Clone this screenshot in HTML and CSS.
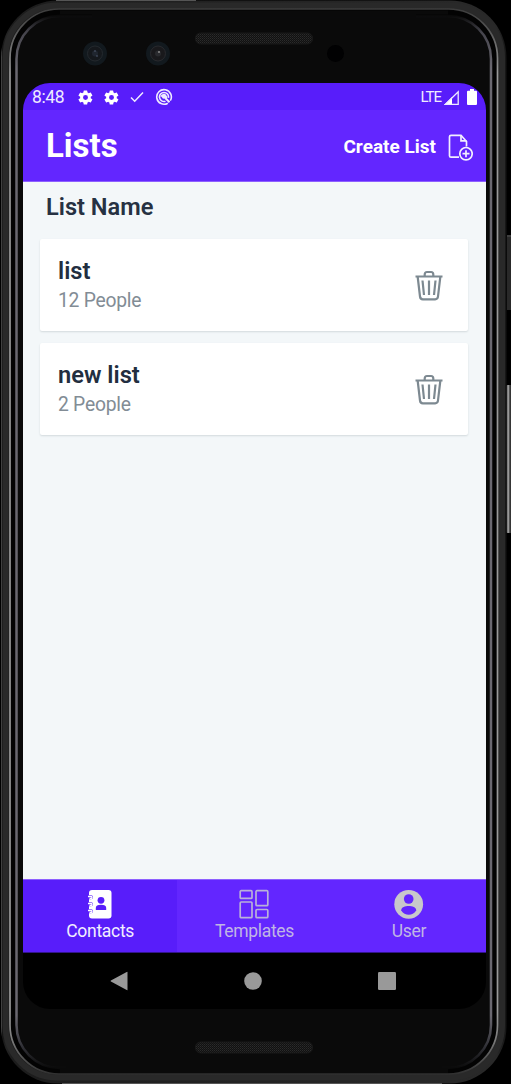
FILE: index.html
```html
<!DOCTYPE html>
<html lang="en">
<head>
<meta charset="utf-8">
<title>Lists</title>
<link rel="stylesheet" href="styles.css">
</head>
<body>
<div class="device">
  <svg class="frame" width="511" height="1084" viewBox="0 0 511 1084" aria-hidden="true">
    <defs>
      <linearGradient id="side" x1="0" x2="1"><stop offset="0" stop-color="#555"/><stop offset=".003" stop-color="#151515"/><stop offset=".01" stop-color="#232323"/><stop offset=".02" stop-color="#1c1c1c"/><stop offset=".98" stop-color="#292929"/><stop offset="1" stop-color="#151515"/></linearGradient>
      <linearGradient id="rim" x1="0" y1="0" x2="0" y2="1"><stop offset="0" stop-color="#3d3d3d"/><stop offset=".02" stop-color="#555"/><stop offset=".06" stop-color="#999"/><stop offset=".94" stop-color="#999"/><stop offset=".97" stop-color="#777"/><stop offset="1" stop-color="#303030"/></linearGradient>
      <linearGradient id="glass" x1="0" y1="0" x2="0" y2="1"><stop offset="0" stop-color="#0a0a0a"/><stop offset=".015" stop-color="#44434b"/><stop offset=".05" stop-color="#6a6870"/><stop offset=".95" stop-color="#6a6870"/><stop offset=".98" stop-color="#303036"/><stop offset="1" stop-color="#0a0a0a"/></linearGradient>
      <linearGradient id="key" x1="0" x2="1"><stop offset="0" stop-color="#444"/><stop offset=".35" stop-color="#aaa"/><stop offset=".65" stop-color="#444"/><stop offset="1" stop-color="#222"/></linearGradient>
      <pattern id="mesh" width="2" height="2" patternUnits="userSpaceOnUse"><rect width="2" height="2" fill="#111"/><rect width="1" height="1" fill="#2b2b2b"/><rect x="1" y="1" width="1" height="1" fill="#202020"/></pattern>
    </defs>
    <rect x="507" y="235" width="5" height="75" fill="#292929"/>
    <path d="M507 236h4" stroke="#555"/>
    <rect x="506.500" y="385" width="5" height="148" rx="1" fill="url(#key)"/>
    <rect x="1" y=".5" width="505.500" height="1083" rx="57" fill="url(#side)"/>
    <rect x="5.500" y="5.500" width="496.500" height="1072" rx="52" fill="none" stroke="#292929" stroke-width="6"/>
    <path d="M56 .5h140M62 1083.500h380" stroke="#555"/>
    <rect x="10" y="9" width="487.500" height="1065" rx="49" fill="#030303" stroke="url(#rim)" stroke-width="1.700"/>
    <rect x="16.500" y="16" width="474.500" height="1052" rx="43" fill="#0a0a0a" stroke="url(#glass)" stroke-width="2.500"/>
    <path d="M60 12.500h388M60 1071h388" stroke="#0a0a0a" stroke-width="4"/>
    <path d="M92 15.500h324M66 1068h376" stroke="#0a0a0a" stroke-width="4"/>
    <rect x="195.500" y="33" width="117" height="11" rx="5" fill="url(#mesh)" stroke="#181818"/>
    <rect x="195.500" y="1042" width="117" height="11" rx="5" fill="url(#mesh)" stroke="#181818"/>
    <g><circle cx="95" cy="53.500" r="12" fill="#12191e"/><circle cx="95" cy="53.500" r="7.500" fill="#15181c" stroke="#24292e"/><circle cx="95" cy="53.500" r="3" fill="#20262f"/><path d="M94 51h2M96 56h2" stroke="#4f586e"/></g>
    <g><circle cx="158" cy="53.500" r="12" fill="#12191e"/><circle cx="158" cy="53.500" r="7.500" fill="#19191c" stroke="#292a2e"/><circle cx="158" cy="53.500" r="3" fill="#292a2e"/><circle cx="159" cy="52" r="1" fill="#888"/></g>
    <circle cx="335.500" cy="53.500" r="8.500" fill="#010102"/>
  </svg>

  <div class="screen">
    <div class="status">
      <span class="time">8:48</span>
      <svg class="gear" width="17" height="17" viewBox="0 0 24 24"><path id="cog" fill-rule="evenodd" d="M19.400 13a7.500 7.500 0 0 0 0-2l2.100-1.600a.5.5 0 0 0 .1-.7l-2-3.400a.5.5 0 0 0-.6-.2l-2.500 1a7.300 7.300 0 0 0-1.700-1l-.4-2.600a.5.5 0 0 0-.5-.5h-4a.5.5 0 0 0-.5.5L9 5.100a7.300 7.300 0 0 0-1.700 1l-2.500-1a.5.5 0 0 0-.6.2l-2 3.400a.5.500 0 0 0 .1.700L4.500 11a7.500 7.500 0 0 0 0 2l-2.200 1.600a.5.500 0 0 0-.1.700l2 3.400a.5.500 0 0 0 .6.200l2.500-1a7.300 7.300 0 0 0 1.700 1l.4 2.600a.5.500 0 0 0 .5.500h4a.5.500 0 0 0 .5-.5l.4-2.600a7.300 7.300 0 0 0 1.700-1l2.500 1a.5.500 0 0 0 .6-.2l2-3.400a.5.500 0 0 0-.1-.7zM12 15.500a3.500 3.500 0 1 1 0-7 3.500 3.500 0 0 1 0 7z"/></svg>
      <svg class="gear" width="17" height="17" viewBox="0 0 24 24"><use href="#cog"/></svg>
      <svg class="check" width="14" height="12" viewBox="0 0 14 12"><path d="M1 6.500l3.700 3.700L13 1.500"/></svg>
      <svg class="badge" width="18" height="18" viewBox="0 0 18 18"><path d="M12.800 15.200A7.300 7.300 0 1 1 15.300 12.700M10.500 13.200A4.500 4.500 0 1 1 13.400 9.800"/><path class="solid" d="M5.200 8.300Q7 5 10.300 6L12.500 9l-.7 1 3.400 3.600-1.400 1.400-4.500-4.500-1.300.3-1.500-2z"/></svg>
      <span class="lte">LTE</span>
      <svg class="signal" width="15" height="15" viewBox="0 0 15 15"><path class="solid" d="M0 15L8 7v8z"/><path d="M1.500 14.300H14.200V1.700z"/></svg>
      <svg class="battery" width="10" height="16" viewBox="0 0 10 16"><path d="M3 0h4v1.700h2a1 1 0 0 1 1 1V15a1 1 0 0 1-1 1H1a1 1 0 0 1-1-1V2.700a1 1 0 0 1 1-1h2z"/></svg>
    </div>

    <header class="appbar">
      <h1 class="title">Lists</h1>
      <div class="create">
        <span class="create-label">Create List</span>
        <svg class="create-icon" width="25" height="27" viewBox="0 0 25 27"><path d="M11 23.200H3Q1.500 23.200 1.500 21.700V2.800Q1.500 1.300 3 1.300H13L18.500 7.500V12.500"/><path d="M13 1.500V6.800H18.500"/><circle cx="18" cy="19.700" r="6.200"/><path class="plus" d="M18 16.200v7M14.500 19.700h7"/></svg>
      </div>
    </header>

    <main class="content">
      <h2 class="heading">List Name</h2>
      <section class="card">
        <div><div class="name">list</div><div class="people">12 People</div></div>
        <svg class="trash" width="28" height="31" viewBox="0 0 28 31"><path id="bin" d="M.5 6.500H27.500M9.700 6V4.500Q9.700 2 12 2h4Q18.300 2 18.300 4.500V6M2.700 7L5 26.500Q5.300 29.300 7.800 29.300H20.200Q22.700 29.300 23 26.500L25.300 7M7.500 10.500L9 25M14 10.500V25M20.500 10.500L19 25"/></svg>
      </section>
      <section class="card">
        <div><div class="name wide">new list</div><div class="people">2 People</div></div>
        <svg class="trash" width="28" height="31" viewBox="0 0 28 31"><use href="#bin"/></svg>
      </section>
    </main>

    <nav class="tabs">
      <div class="tab active">
        <svg width="28" height="30" viewBox="0 0 28 30"><rect x="3" y="1" width="22.500" height="28.500" rx="3" fill="#fff"/><path d="M2 8.200h3M2 15.200h3M2 22.200h3" stroke="#581dfa" stroke-width="4" stroke-linecap="round"/><path d="M2 7.500h3Q6 7.500 6 8.500T5 9.500H3.500M2 14.500h3Q6 14.500 6 15.500T5 16.500H3.500M2 21.500h3Q6 21.500 6 22.500T5 23.500H3.500" fill="none" stroke="#fff" stroke-width="1.300"/><circle cx="15" cy="11.300" r="3.400" fill="#581dfa"/><path d="M9.800 21v-2Q9.800 15.700 15 15.700T20.200 19v2z" fill="#581dfa"/></svg>
        <span>Contacts</span>
      </div>
      <div class="tab">
        <svg width="30" height="30" viewBox="0 0 30 30"><g fill="none" stroke="#b9b1d9" stroke-width="1.700"><rect x="1.200" y="1.700" width="11.800" height="7.700" rx="1"/><rect x="1.200" y="13" width="11.800" height="15.700" rx="1"/><rect x="17" y="1.700" width="11.800" height="15" rx="1"/><rect x="17" y="20.500" width="11.800" height="8.200" rx="1"/></g></svg>
        <span>Templates</span>
      </div>
      <div class="tab">
        <svg width="30" height="30" viewBox="0 0 30 30"><circle cx="14.700" cy="15.300" r="14.400" fill="#c8c8cb"/><circle cx="14.700" cy="10" r="4.800" fill="#6326ff"/><path d="M7.200 21.500C7.200 18 11.200 17 14.700 17S22.200 18 22.200 21.500Q19.200 25.800 14.700 25.800T7.200 21.500z" fill="#6326ff"/></svg>
        <span>User</span>
      </div>
    </nav>

    <div class="system">
      <svg width="18" height="20" viewBox="0 0 18 20"><path d="M17.500 1.300v17.400q0 .8-.8.400L.9 10.600q-.8-.6 0-1.200L16.700.9q.8-.4.800.4z"/></svg>
      <svg width="18" height="18" viewBox="0 0 18 18"><circle cx="9" cy="9" r="8.800"/></svg>
      <svg width="18" height="18" viewBox="0 0 18 18"><rect width="18" height="18" rx="1.300"/></svg>
    </div>
  </div>
</div>
</body>
</html>
```
FILE: styles.css
```css
body { margin: 0; background: #000; font-family: Roboto, sans-serif; }
svg { display: block; flex: none; }
h1, h2 { margin: 0; }
.device { position: relative; box-sizing: border-box; width: 511px; height: 1084px; padding: 83px 25px 75px 23px; overflow: hidden; }
.frame { position: absolute; inset: 0; }
.screen { position: relative; display: flex; flex-direction: column; width: 463px; height: 926px; border-radius: 27px; overflow: hidden; background: #000; }

.status { display: flex; align-items: center; box-sizing: border-box; height: 27px; padding: 1px 9px 0; background: #581dfa; color: #eeeaff; fill: #fff; }
.time { width: 32px; margin-right: 13px; font-size: 17.5px; line-height: 20px; letter-spacing: -.4px; white-space: nowrap; }
.gear { margin-right: 9px; }
.check { margin: 0 11px 0 1px; fill: none; stroke: #eeeaff; stroke-width: 1.5; }
.badge { fill: none; stroke: #eeeaff; stroke-width: 1.6; }
.badge .solid { fill: #eeeaff; stroke: none; }
.lte { margin-left: auto; font-size: 15px; line-height: 20px; letter-spacing: -1px; }
.signal { margin: 0 8px 0 3px; fill: none; stroke: #eeeaff; stroke-width: 1.3; }
.signal .solid { fill: #fff; stroke: none; }

.appbar { display: flex; align-items: center; justify-content: space-between; box-sizing: border-box; height: 72px; padding: 1px 13px 0 23px; background: #6326ff; color: #fff; border-bottom: 1px solid #8d60ff; }
.title { font-size: 33px; line-height: 40px; font-weight: 700; }
.create { display: flex; align-items: center; gap: 12px; padding-top: 2px; }
.create-label { font-size: 19px; line-height: 24px; font-weight: 700; }
.create-icon { fill: none; stroke: #f2efff; stroke-width: 1.7; }

.content { flex: 1; box-sizing: border-box; padding: 11px 18px 0 17px; background: #f3f7f9; }
.heading { margin: 0 0 18px 6px; font-size: 23.6px; line-height: 28px; font-weight: 600; color: #263142; }
.card { display: flex; align-items: center; justify-content: space-between; box-sizing: border-box; height: 92px; margin-bottom: 12px; padding: 1px 25px 0 18px; border-radius: 2px; background: #fff; box-shadow: 0 1px 2px #d2d9dc; }
.name { font-size: 23.7px; line-height: 30px; font-weight: 600; color: #222e40; }
.people { font-size: 19.3px; line-height: 30px; letter-spacing: -.25px; color: #828c95; }
.trash { fill: none; stroke: #7d8991; stroke-width: 2.2; }

.tabs { display: grid; grid-template-columns: repeat(3, 1fr); box-sizing: border-box; height: 74px; background: #6326ff; border-top: 1px solid #8d60ff; border-bottom: 1px solid #32158a; }
.tab { display: flex; flex-direction: column; align-items: center; padding-top: 9px; color: #c0b5e5; font-size: 17.5px; line-height: 24px; letter-spacing: -.3px; }
.active { background: #581dfa; color: #f2eeff; }

.system { display: flex; align-items: center; justify-content: space-between; box-sizing: border-box; height: 56px; padding: 0 90px 0 87px; fill: #999; }
.tabs, .system { flex: none; }
```
